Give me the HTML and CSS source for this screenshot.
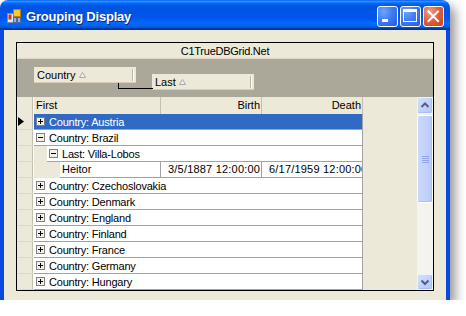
FILE: index.html
```html
<!DOCTYPE html>
<html>
<head>
<meta charset="utf-8">
<title>Grouping Display</title>
<link rel="stylesheet" href="styles.css">
</head>
<body>
<div class="window">
  <div class="titlebar">
    <svg class="appicon" width="14" height="14" viewBox="0 0 14 14">
      <rect x="0.5" y="4.5" width="6" height="9" fill="#dfe6f2" stroke="#7888a8"/>
      <rect x="1.5" y="5.5" width="3" height="5" fill="#d8321c"/>
      <rect x="6.5" y="0.5" width="7" height="7" fill="#f9cb2a" stroke="#b08010"/>
      <rect x="6.5" y="8.5" width="3" height="5" fill="#8fb6f0" stroke="#4a68a8"/>
      <rect x="10.5" y="8.5" width="3" height="5" fill="#8fb6f0" stroke="#4a68a8"/>
    </svg>
    <span class="title">Grouping Display</span>
    <div class="tbtns">
      <div class="tbtn tb-blue">
        <svg width="19" height="19" viewBox="0 0 19 19"><rect x="4" y="12" width="6" height="3" fill="#fff"/></svg>
      </div>
      <div class="tbtn tb-blue">
        <svg width="19" height="19" viewBox="0 0 19 19"><rect x="2.5" y="2.5" width="13" height="12" fill="none" stroke="#fff"/><rect x="2" y="2" width="14" height="3" fill="#fff"/></svg>
      </div>
      <div class="tbtn tb-red">
        <svg width="19" height="19" viewBox="0 0 19 19"><path d="M4.5 4.5 L14 14 M14 4.5 L4.5 14" stroke="#fff" stroke-width="2" stroke-linecap="square"/></svg>
      </div>
    </div>
  </div>
  <div class="client">
    <div class="grid">
      <div class="caption">C1TrueDBGrid.Net</div>
      <div class="grouparea">
        <div class="gbox">
          <span>Country</span>
          <svg class="gtri" width="7" height="6" viewBox="0 0 7 6"><path d="M3.5 0.5 L6.5 5.5 L0.5 5.5 Z" fill="#f4f2ea" stroke="#a8a8a8"/></svg>
          <span class="gsep"></span>
        </div>
        <div class="gbox glast">
          <span>Last</span>
          <svg class="gtri" width="7" height="6" viewBox="0 0 7 6"><path d="M3.5 0.5 L6.5 5.5 L0.5 5.5 Z" fill="#f4f2ea" stroke="#a8a8a8"/></svg>
          <span class="gsep"></span>
        </div>
      </div>
      <div class="gbody">
        <div class="gleft">
          <div class="row hdr">
            <div class="rsel"></div>
            <div class="main">
              <div class="hc c1">First</div>
              <div class="hc c2">Birth</div>
              <div class="hc c3">Death</div>
            </div>
            <div class="fill"></div>
          </div>

          <div class="row">
            <div class="rsel"><svg class="ptr" width="6" height="9" viewBox="0 0 6 9"><path d="M0 0 L6 4.5 L0 9 Z" fill="#000"/></svg></div>
            <div class="main">
              <div class="gc hilite"><svg class="pm" width="9" height="9" viewBox="0 0 9 9"><rect x="0.5" y="0.5" width="8" height="8" fill="#f2f0e8" stroke="#808080"/><path d="M2 4.5h5M4.5 2v5" stroke="#000"/></svg><span>Country: Austria</span></div>
            </div>
            <div class="fill"></div>
          </div>

          <div class="row">
            <div class="rsel"></div>
            <div class="main">
              <div class="gc"><svg class="pm" width="9" height="9" viewBox="0 0 9 9"><rect x="0.5" y="0.5" width="8" height="8" fill="#f2f0e8" stroke="#808080"/><path d="M2 4.5h5" stroke="#000"/></svg><span>Country: Brazil</span></div>
            </div>
            <div class="fill"></div>
          </div>

          <div class="row">
            <div class="rsel"></div>
            <div class="main">
              <div class="ind ind1"></div>
              <div class="gc"><svg class="pm" width="9" height="9" viewBox="0 0 9 9"><rect x="0.5" y="0.5" width="8" height="8" fill="#f2f0e8" stroke="#808080"/><path d="M2 4.5h5" stroke="#000"/></svg><span>Last: Villa-Lobos</span></div>
            </div>
            <div class="fill"></div>
          </div>

          <div class="row">
            <div class="rsel"></div>
            <div class="main">
              <div class="ind ind2"></div>
              <div class="dc c1">Heitor</div>
              <div class="dc c2">3/5/1887 12:00:00</div>
              <div class="dc c3">6/17/1959 12:00:00</div>
            </div>
            <div class="fill"></div>
          </div>

          <div class="row">
            <div class="rsel"></div>
            <div class="main">
              <div class="gc"><svg class="pm" width="9" height="9" viewBox="0 0 9 9"><rect x="0.5" y="0.5" width="8" height="8" fill="#f2f0e8" stroke="#808080"/><path d="M2 4.5h5M4.5 2v5" stroke="#000"/></svg><span>Country: Czechoslovakia</span></div>
            </div>
            <div class="fill"></div>
          </div>

          <div class="row">
            <div class="rsel"></div>
            <div class="main">
              <div class="gc"><svg class="pm" width="9" height="9" viewBox="0 0 9 9"><rect x="0.5" y="0.5" width="8" height="8" fill="#f2f0e8" stroke="#808080"/><path d="M2 4.5h5M4.5 2v5" stroke="#000"/></svg><span>Country: Denmark</span></div>
            </div>
            <div class="fill"></div>
          </div>

          <div class="row">
            <div class="rsel"></div>
            <div class="main">
              <div class="gc"><svg class="pm" width="9" height="9" viewBox="0 0 9 9"><rect x="0.5" y="0.5" width="8" height="8" fill="#f2f0e8" stroke="#808080"/><path d="M2 4.5h5M4.5 2v5" stroke="#000"/></svg><span>Country: England</span></div>
            </div>
            <div class="fill"></div>
          </div>

          <div class="row">
            <div class="rsel"></div>
            <div class="main">
              <div class="gc"><svg class="pm" width="9" height="9" viewBox="0 0 9 9"><rect x="0.5" y="0.5" width="8" height="8" fill="#f2f0e8" stroke="#808080"/><path d="M2 4.5h5M4.5 2v5" stroke="#000"/></svg><span>Country: Finland</span></div>
            </div>
            <div class="fill"></div>
          </div>

          <div class="row">
            <div class="rsel"></div>
            <div class="main">
              <div class="gc"><svg class="pm" width="9" height="9" viewBox="0 0 9 9"><rect x="0.5" y="0.5" width="8" height="8" fill="#f2f0e8" stroke="#808080"/><path d="M2 4.5h5M4.5 2v5" stroke="#000"/></svg><span>Country: France</span></div>
            </div>
            <div class="fill"></div>
          </div>

          <div class="row">
            <div class="rsel"></div>
            <div class="main">
              <div class="gc"><svg class="pm" width="9" height="9" viewBox="0 0 9 9"><rect x="0.5" y="0.5" width="8" height="8" fill="#f2f0e8" stroke="#808080"/><path d="M2 4.5h5M4.5 2v5" stroke="#000"/></svg><span>Country: Germany</span></div>
            </div>
            <div class="fill"></div>
          </div>

          <div class="row">
            <div class="rsel"></div>
            <div class="main">
              <div class="gc"><svg class="pm" width="9" height="9" viewBox="0 0 9 9"><rect x="0.5" y="0.5" width="8" height="8" fill="#f2f0e8" stroke="#808080"/><path d="M2 4.5h5M4.5 2v5" stroke="#000"/></svg><span>Country: Hungary</span></div>
            </div>
            <div class="fill"></div>
          </div>
        </div>
        <div class="vscroll">
          <div class="sbtn up"><svg width="14" height="15" viewBox="0 0 14 15"><path d="M3.5 9 L7 5.5 L10.5 9" fill="none" stroke="#4d6185" stroke-width="2"/></svg></div>
          <div class="thumb"><svg width="7" height="7" viewBox="0 0 7 7"><path d="M0 0.5h7M0 2.5h7M0 4.5h7M0 6.5h7" stroke="#8ea6e6"/></svg></div>
          <div class="track"></div>
          <div class="sbtn down"><svg width="14" height="14" viewBox="0 0 14 14"><path d="M3.5 5.5 L7 9 L10.5 5.5" fill="none" stroke="#4d6185" stroke-width="2"/></svg></div>
        </div>
      </div>
    </div>
  </div>
</div>
</body>
</html>
```

FILE: styles.css
```css
* { box-sizing: border-box; }
html, body { margin: 0; padding: 0; background: #fff; }
body {
  font-family: "Liberation Sans", Arial, sans-serif;
  font-size: 11px;
  color: #000;
}

.window {
  width: 450px;
  height: 300px;
  display: flex;
  flex-direction: column;
  border-radius: 8px 8px 0 0;
  box-shadow: 5px 6px 11px rgba(0, 0, 0, 0.42);
}

.titlebar {
  height: 30px;
  flex: none;
  display: flex;
  align-items: flex-start;
  padding-right: 6px;
  border-radius: 8px 8px 0 0;
  background: linear-gradient(to bottom,
    #0058ee 0%, #3593ff 4%, #288eff 6%, #127dff 8%, #036ffc 10%,
    #0262ee 14%, #0057e5 20%, #0054e3 24%, #0055eb 56%, #005bf5 66%,
    #026afe 76%, #0062ef 86%, #0052d6 92%, #0040ab 94%, #003092 100%);
}
.appicon { flex: none; margin: 9px 0 0 7px; display: block; }
.title {
  margin: 9px 0 0 5px;
  line-height: 16px;
  font-size: 13px;
  font-weight: bold;
  letter-spacing: -0.2px;
  color: #fff;
  text-shadow: 1px 1px 0 #0c2a8c;
}
.tbtns { margin-left: auto; margin-top: 6px; display: flex; gap: 2px; }
.tbtn {
  width: 21px;
  height: 21px;
  border: 1px solid #fff;
  border-radius: 3px;
}
.tbtn svg { display: block; }
.tb-blue {
  background: radial-gradient(circle at 30% 25%, #6fa5ff 0%, #3e7cf5 45%, #2559e0 100%);
}
.tb-red {
  background: radial-gradient(circle at 30% 25%, #f3a086 0%, #e2603c 45%, #c9401b 100%);
}

.client {
  flex: 1;
  display: flex;
  background: #ece9d8;
  border: 4px solid #0b48e2;
  border-top: 0;
  padding: 12px;
}

.grid {
  flex: 1;
  display: flex;
  flex-direction: column;
  border: 1px solid #000;
  background: #ece9d8;
  overflow: hidden;
}

.caption {
  height: 16px;
  flex: none;
  line-height: 16px;
  text-align: center;
  letter-spacing: -0.25px;
  border-bottom: 1px solid #e2d6c6;
}

.grouparea {
  height: 38px;
  flex: none;
  display: flex;
  align-items: flex-start;
  gap: 16px;
  padding-left: 17px;
  background: #aca899;
}
.gbox {
  width: 102px;
  height: 16px;
  margin-top: 8px;
  display: flex;
  align-items: center;
  padding-left: 3px;
  background: #ece9d8;
  border-bottom: 1px solid #dccbb8;
}
.gtri { margin-left: 3px; display: block; }
.gsep {
  margin-left: auto;
  margin-right: 2px;
  width: 2px;
  height: 12px;
  border-left: 1px solid #b8b4a4;
  background: #fff;
}
.glast { margin-top: 15px; position: relative; }
.glast::before {
  content: "";
  position: absolute;
  left: -34px;
  top: 9px;
  width: 34px;
  height: 5px;
  border-left: 1px solid #000;
  border-bottom: 1px solid #000;
}

.gbody { flex: 1; display: flex; min-height: 0; }
.gleft { flex: 1; display: flex; flex-direction: column; overflow: hidden; min-width: 0; }

.row { display: flex; height: 16px; flex: none; }
.row.hdr { height: 17px; }
.rsel {
  width: 17px;
  flex: none;
  display: flex;
  align-items: center;
  background: #ece9d8;
  border-right: 1px solid #fbfaf6;
  box-shadow: inset -1px 0 0 #c4c0b0;
}
.row:not(.hdr) .rsel { border-bottom: 1px solid #dedaca; }
.ptr { display: block; margin-left: 1px; }
.main { width: 329px; flex: none; display: flex; }
.fill { flex: 1; background: #ece9d8; }

.hc {
  height: 17px;
  line-height: 17px;
  white-space: nowrap;
  overflow: hidden;
  border-right: 1px solid #c4c0b0;
  padding: 0 1px 0 2px;
}
.hc.c1 { width: 127px; }
.hc.c2, .hc.c3 { width: 101px; text-align: right; }

.ind { flex: none; background: #ece9d8; }
.ind1 { width: 13px; }
.ind2 { width: 26px; }

.gc {
  flex: 1;
  display: flex;
  align-items: center;
  padding-left: 2px;
  white-space: nowrap;
  overflow: hidden;
  letter-spacing: -0.2px;
  background: #fff;
  border-bottom: 1px solid #a3a3a3;
  border-right: 1px solid #a3a3a3;
}
.gc.hilite { background: #316ac5; color: #fff; }
.pm { display: block; flex: none; margin-right: 4px; }

.dc {
  width: 101px;
  flex: none;
  line-height: 15px;
  white-space: nowrap;
  overflow: hidden;
  letter-spacing: 0.2px;
  background: #fff;
  border-bottom: 1px solid #a3a3a3;
  border-right: 1px solid #a3a3a3;
}
.dc.c1 { padding-left: 2px; letter-spacing: 0; }
.dc.c2, .dc.c3 { text-align: right; padding: 0 2px 0 7px; }

.vscroll {
  width: 16px;
  flex: none;
  display: flex;
  flex-direction: column;
  background: #f3f1ea;
}
.sbtn {
  flex: none;
  display: flex;
  align-items: center;
  justify-content: center;
  border: 1px solid #eef3fe;
  border-radius: 2px;
  background: linear-gradient(135deg, #d3e0fd 0%, #bfd1fa 60%, #b2c7f6 100%);
  box-shadow: inset -1px -1px 0 #a9bff2;
}
.sbtn svg { display: block; }
.sbtn.up { height: 17px; }
.sbtn.down { height: 16px; }
.thumb {
  height: 88px;
  flex: none;
  margin-top: 1px;
  display: flex;
  align-items: center;
  justify-content: center;
  border: 1px solid #fff;
  border-radius: 2px;
  background: linear-gradient(to right, #cbd8fc 0%, #c1d2fb 60%, #b6c9f6 100%);
  box-shadow: inset -1px -1px 0 #a9bff2;
}
.thumb svg { display: block; }
.track { flex: 1; background: #f4f3ee; }
```
